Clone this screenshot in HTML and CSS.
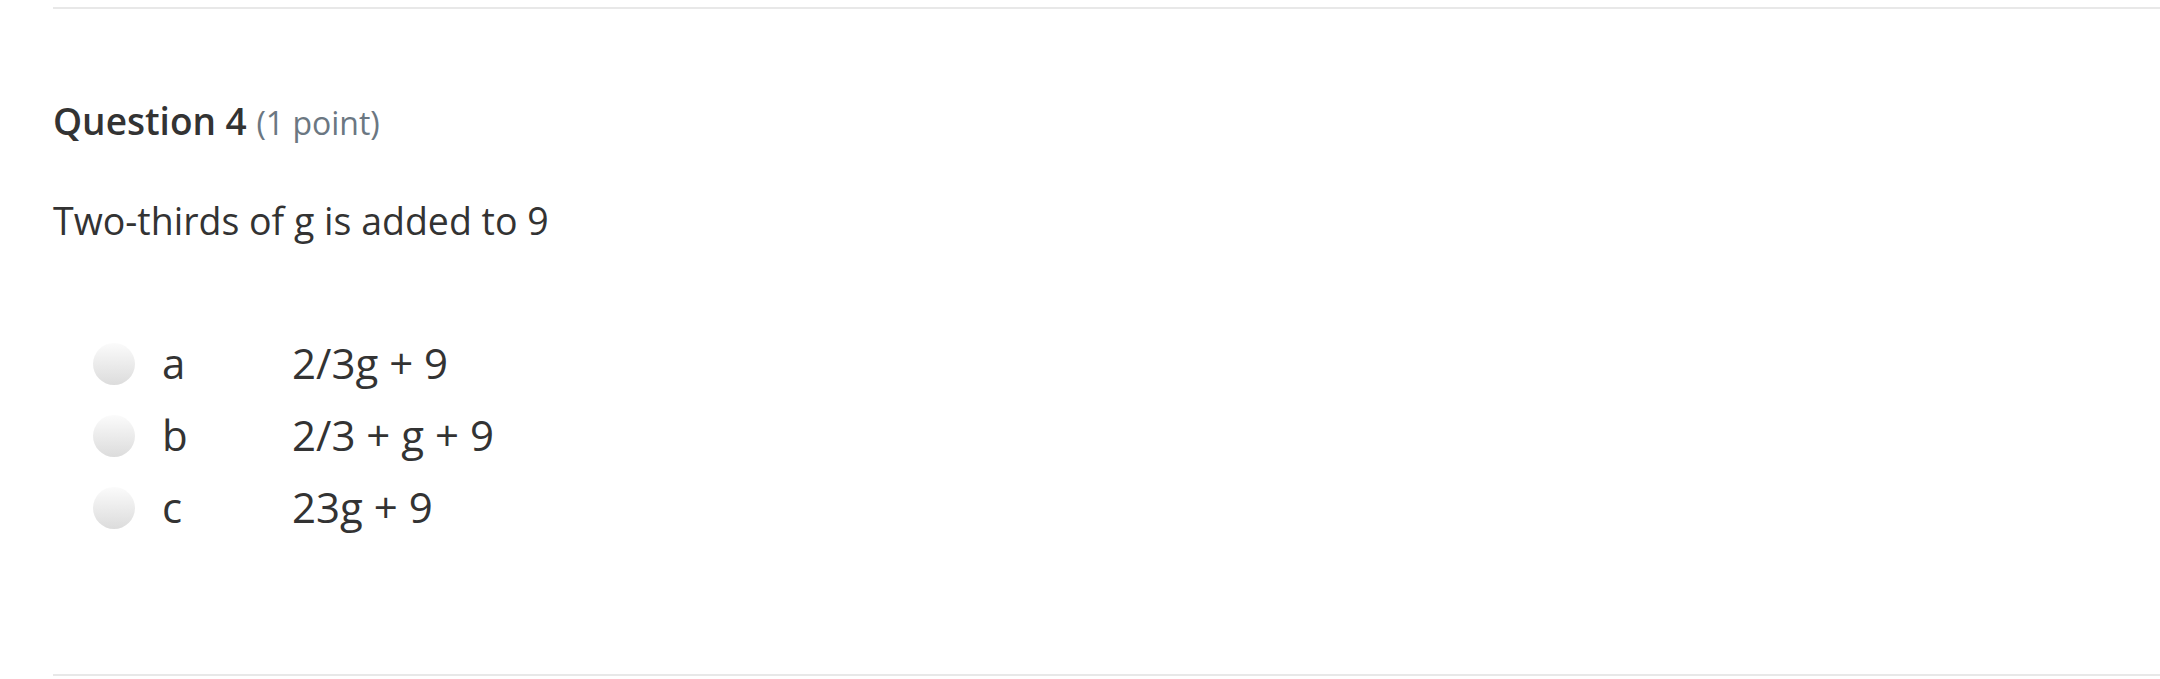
FILE: index.html
```html
<!DOCTYPE html>
<html lang="en">
<head>
<meta charset="utf-8">
<title>Question 4</title>
<link rel="stylesheet" href="styles.css">
</head>
<body>
<div class="question">
  <h2 class="q-title">Question 4 <span class="q-points">(1 point)</span></h2>
  <p class="q-text">Two-thirds of g is added to 9</p>
  <ul class="options">
    <li class="option"><span class="radio"></span><span class="opt-letter">a</span><span class="opt-text">2/3g + 9</span></li>
    <li class="option"><span class="radio"></span><span class="opt-letter">b</span><span class="opt-text">2/3 + g + 9</span></li>
    <li class="option"><span class="radio"></span><span class="opt-letter">c</span><span class="opt-text">23g + 9</span></li>
  </ul>
</div>
</body>
</html>
```
FILE: styles.css
```css
html, body {
  margin: 0;
  padding: 0;
  background: #ffffff;
}
body {
  font-family: "Open Sans", "Liberation Sans", sans-serif;
  color: #333333;
  padding: 7px 0 0 53px;
}
.question {
  border-top: 2px solid #e8e8e8;
  border-bottom: 2px solid #e8e8e8;
  padding-top: 90px;
  padding-bottom: 131px;
}
.q-title {
  margin: 0;
  font-size: 37px;
  font-weight: 600;
  line-height: 43px;
  color: #333333;
}
.q-points {
  font-size: 32px;
  font-weight: 400;
  color: #6b7782;
}
.q-text {
  margin: 50px 0 0;
  font-size: 37.5px;
  line-height: 54px;
}
.options {
  list-style: none;
  margin: 79px 0 0;
  padding: 0 0 0 40px;
}
.option {
  display: flex;
  align-items: center;
  height: 72px;
  font-size: 42px;
  line-height: 72px;
}
.radio {
  width: 42px;
  height: 42px;
  border-radius: 50%;
  background: linear-gradient(#fbfbfb, #dcdcdc);
  margin-top: 2px;
  flex: none;
}
.opt-letter {
  margin-left: 27px;
  width: 130px;
}
.opt-text {
  white-space: nowrap;
}
```
